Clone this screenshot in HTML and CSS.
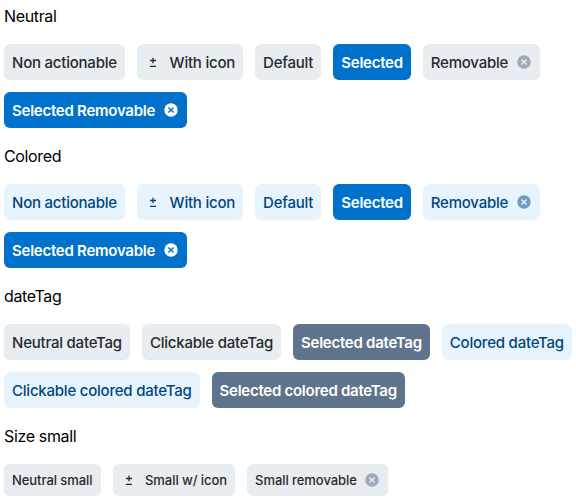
FILE: index.html
```html
<!DOCTYPE html>
<html lang="en">
<head>
<meta charset="utf-8">
<title>Tags</title>
<link rel="stylesheet" href="styles.css">
</head>
<body>
<svg class="defs" width="0" height="0" aria-hidden="true">
  <symbol id="plus-minus" viewBox="0 0 16 16"><path d="M5 6.5h6M8 3.7v5.6M5 12.3h6" fill="none" stroke="currentColor" stroke-width="1.3"/></symbol>
  <symbol id="close" viewBox="0 0 14 14"><circle cx="7" cy="7" r="6.7" fill="currentColor"/><path d="M4.4 4.4l5.2 5.2M9.6 4.4l-5.2 5.2" fill="none" stroke="var(--cross)" stroke-width="1.4"/></symbol>
</svg>
<main class="page">
  <section class="group">
    <h2 class="title">Neutral</h2>
    <div class="tags">
      <span class="tag">Non actionable</span>
      <span class="tag"><svg class="icon"><use href="#plus-minus"/></svg>With icon</span>
      <span class="tag">Default</span>
      <span class="tag selected">Selected</span>
      <span class="tag">Removable<svg class="close"><use href="#close"/></svg></span>
      <span class="tag selected">Selected Removable<svg class="close"><use href="#close"/></svg></span>
    </div>
  </section>
  <section class="group">
    <h2 class="title">Colored</h2>
    <div class="tags">
      <span class="tag colored">Non actionable</span>
      <span class="tag colored"><svg class="icon"><use href="#plus-minus"/></svg>With icon</span>
      <span class="tag colored">Default</span>
      <span class="tag selected">Selected</span>
      <span class="tag colored">Removable<svg class="close"><use href="#close"/></svg></span>
      <span class="tag selected">Selected Removable<svg class="close"><use href="#close"/></svg></span>
    </div>
  </section>
  <section class="group">
    <h2 class="title">dateTag</h2>
    <div class="tags">
      <span class="tag">Neutral dateTag</span>
      <span class="tag">Clickable dateTag</span>
      <span class="tag date-selected">Selected dateTag</span>
      <span class="tag colored">Colored dateTag</span>
      <span class="tag colored">Clickable colored dateTag</span>
      <span class="tag date-selected">Selected colored dateTag</span>
    </div>
  </section>
  <section class="group">
    <h2 class="title">Size small</h2>
    <div class="tags">
      <span class="tag small">Neutral small</span>
      <span class="tag small"><svg class="icon"><use href="#plus-minus"/></svg>Small w/ icon</span>
      <span class="tag small">Small removable<svg class="close"><use href="#close"/></svg></span>
    </div>
  </section>
</main>
</body>
</html>
```

FILE: styles.css
```css
body {
  margin: 0;
  background: #fff;
  color: #000;
  font-family: Inter, "Liberation Sans", sans-serif;
}
.defs { display: block; }
.page {
  display: flex;
  flex-direction: column;
  gap: 12px;
  padding-left: 4px;
}
.group {
  display: flex;
  flex-direction: column;
  gap: 12px;
}
.title {
  margin: 0;
  font-size: 16px;
  font-weight: 400;
  line-height: 32px;
  letter-spacing: -0.35px;
}
.tags {
  display: flex;
  flex-wrap: wrap;
  gap: 12px;
}
.tag {
  --cross: #e8edf1;
  display: flex;
  align-items: center;
  box-sizing: border-box;
  height: 36px;
  padding: 1px 8px 0;
  border-radius: 6px;
  background: #e8edf1;
  color: #252a31;
  font-size: 15px;
  font-weight: 500;
  letter-spacing: -0.22px;
  white-space: nowrap;
}
.colored {
  --cross: #e8f4fd;
  background: #e8f4fd;
  color: #004680;
}
.selected {
  --cross: #0172cb;
  background: #0172cb;
  color: #fff;
  font-weight: 600;
  letter-spacing: -0.25px;
}
.date-selected {
  background: #5f738c;
  color: #fff;
  font-weight: 600;
  letter-spacing: -0.26px;
}
.small {
  height: 32px;
  padding-top: 0;
  font-size: 13px;
  letter-spacing: -0.06px;
}
.icon {
  width: 16px;
  height: 16px;
  margin: -1px 8.7px 0 0;
}
.small .icon {
  margin: 0 8.5px 0 0;
}
.close {
  width: 14px;
  height: 14px;
  margin: -1px 1px 0 9px;
  color: #9fa9b8;
}
.small .close {
  margin: 0 1px 0 8px;
}
.colored .close { color: #739bc0; }
.selected .close { color: #fff; }
```
